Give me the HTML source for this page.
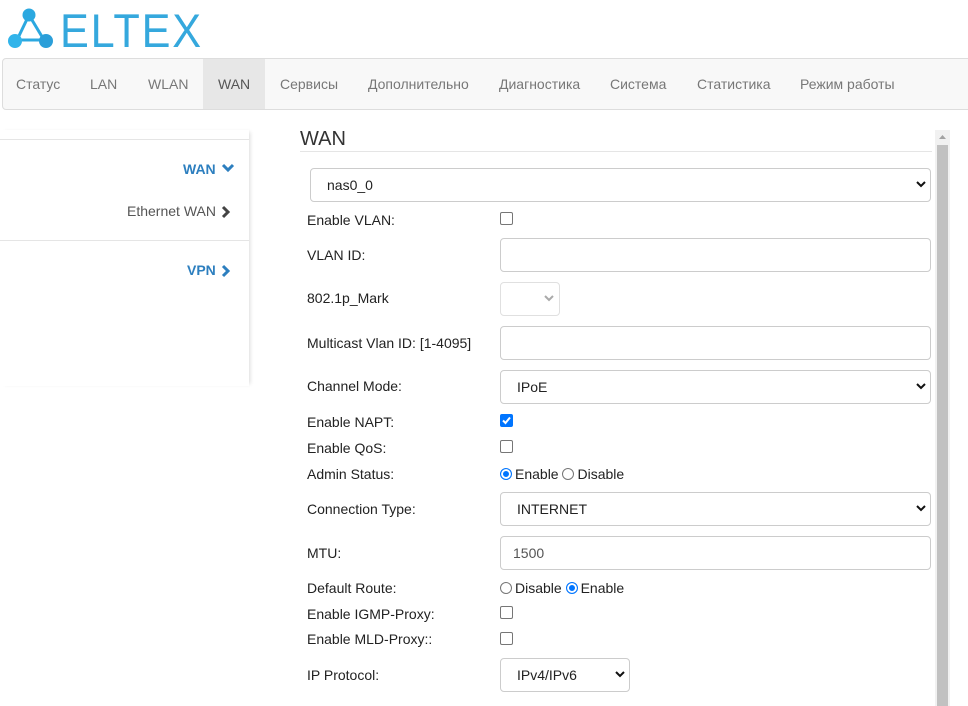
<!DOCTYPE html>
<html><head><meta charset="utf-8"><style>
body{margin:0;width:968px;height:706px;overflow:hidden;background:#fff;font-family:"Liberation Sans",sans-serif;font-size:14px;color:#222;position:relative}
.a{position:absolute}
.nav{left:2px;top:58px;width:980px;height:50px;background:#f8f8f8;border:1px solid #ddd;border-radius:4px}
.ni{top:76px;color:#777;font-size:14px}
.box{position:absolute;border:1px solid #ccc;border-radius:4px;box-sizing:border-box;background:#fff}
.lbl{position:absolute;left:307px;font-size:14px;color:#222}
.cb{position:absolute;left:500px;width:13px;height:13px;border:1px solid #767676;border-radius:2px;box-sizing:border-box;background:#fff}
.chev{position:absolute;right:3px;top:11px}
.rd{display:inline-block;width:12px;height:12px;border:1px solid #767676;border-radius:50%;box-sizing:border-box;vertical-align:-1px;margin-right:3px;background:#fff}
.rd.on{border:1px solid #0075ff;box-shadow:inset 0 0 0 2px #fff;background:#0075ff}
</style></head><body>
<svg class="a" style="left:6px;top:8px" width="50" height="42" viewBox="0 0 50 42">
<g fill="#2ba8e0" stroke="#2ba8e0" stroke-width="3">
<line x1="23" y1="7" x2="11" y2="32"/><line x1="23" y1="7" x2="38" y2="32"/><line x1="11" y1="32" x2="38" y2="32"/>
</g>
<circle cx="23" cy="7" r="6.5" fill="#2ba8e0"/><circle cx="9" cy="33" r="7" fill="#32b4ea"/><circle cx="40" cy="33" r="7" fill="#2b9fd9"/>
</svg>
<div class="a" style="left:60px;top:3px;font-size:47px;color:#35a8dd;letter-spacing:2px;transform:scaleX(0.92);transform-origin:left;font-weight:400">ELTEX</div>
<div class="a nav"></div>
<div class="a" style="left:203px;top:59px;width:62px;height:50px;background:#e7e7e7"></div>
<div class="a ni" style="left:16px">Статус</div>
<div class="a ni" style="left:90px">LAN</div>
<div class="a ni" style="left:148px">WLAN</div>
<div class="a ni" style="left:218px;color:#555">WAN</div>
<div class="a ni" style="left:280px">Сервисы</div>
<div class="a ni" style="left:368px">Дополнительно</div>
<div class="a ni" style="left:499px">Диагностика</div>
<div class="a ni" style="left:610px">Система</div>
<div class="a ni" style="left:697px">Статистика</div>
<div class="a ni" style="left:800px">Режим работы</div>

<div class="a" style="left:0;top:130px;width:249px;height:256px;box-shadow:3px 0 4px -2px rgba(0,0,0,0.15)"></div>
<div class="a" style="left:0;top:139px;width:249px;height:1px;background:#e5e5e5"></div>
<div class="a" style="left:0;top:240px;width:249px;height:1px;background:#e5e5e5"></div>
<div class="a" style="left:183px;top:161px;color:#2d7fbf;font-weight:bold">WAN</div>
<svg class="a" style="left:221px;top:163px" width="14" height="10"><polyline points="2,2 7,7 12,2" fill="none" stroke="#2d7fbf" stroke-width="3"/></svg>
<div class="a" style="left:127px;top:203px;color:#555">Ethernet WAN</div>
<svg class="a" style="left:221px;top:205px" width="10" height="14"><polyline points="2,2 7,7 2,12" fill="none" stroke="#444" stroke-width="3"/></svg>
<div class="a" style="left:187px;top:262px;color:#2d7fbf;font-weight:bold">VPN</div>
<svg class="a" style="left:221px;top:264px" width="10" height="14"><polyline points="2,2 7,7 2,12" fill="none" stroke="#2d7fbf" stroke-width="3"/></svg>

<div class="a" style="left:300px;top:128px;font-size:20px;color:#333">WAN</div>
<div class="a" style="left:300px;top:151px;width:632px;height:1px;background:#e5e5e5"></div>

<div class="box" style="left:310px;top:168px;width:621px;height:34px"><span class="a" style="left:16px;top:8px">nas0_0</span><svg class="chev" width="12" height="10"><polyline points="2,2 6,6 10,2" fill="none" stroke="#111" stroke-width="2"/></svg></div>
<div class="lbl" style="top:212px">Enable VLAN:</div><div class="cb" style="top:212px"></div>
<div class="lbl" style="top:247px">VLAN ID:</div><div class="box" style="left:500px;top:238px;width:431px;height:34px"></div>
<div class="lbl" style="top:290px">802.1p_Mark</div><div class="box" style="left:500px;top:282px;width:60px;height:34px;border-color:#e0e0e0"><svg class="chev" style="right:4px" width="12" height="10"><polyline points="2,2 6,6 10,2" fill="none" stroke="#aaa" stroke-width="2"/></svg></div>
<div class="lbl" style="top:335px">Multicast Vlan ID: [1-4095]</div><div class="box" style="left:500px;top:326px;width:431px;height:34px"></div>
<div class="lbl" style="top:378px">Channel Mode:</div><div class="box" style="left:500px;top:370px;width:431px;height:34px"><span class="a" style="left:16px;top:8px">IPoE</span><svg class="chev" width="12" height="10"><polyline points="2,2 6,6 10,2" fill="none" stroke="#111" stroke-width="2"/></svg></div>
<div class="lbl" style="top:414px">Enable NAPT:</div><div class="cb" style="top:414px;background:#0075ff;border-color:#0075ff"><svg width="11" height="11" style="position:absolute;left:0;top:0"><polyline points="2,5.5 4.5,8 9,2.5" fill="none" stroke="#fff" stroke-width="2"/></svg></div>
<div class="lbl" style="top:440px">Enable QoS:</div><div class="cb" style="top:440px"></div>
<div class="lbl" style="top:466px">Admin Status:</div><div class="a" style="left:500px;top:466px"><span class="rd on"></span>Enable <span class="rd"></span>Disable</div>
<div class="lbl" style="top:501px">Connection Type:</div><div class="box" style="left:500px;top:492px;width:431px;height:34px"><span class="a" style="left:16px;top:8px">INTERNET</span><svg class="chev" width="12" height="10"><polyline points="2,2 6,6 10,2" fill="none" stroke="#111" stroke-width="2"/></svg></div>
<div class="lbl" style="top:545px">MTU:</div><div class="box" style="left:500px;top:536px;width:431px;height:34px"><span class="a" style="left:12px;top:8px;color:#555">1500</span></div>
<div class="lbl" style="top:580px">Default Route:</div><div class="a" style="left:500px;top:580px"><span class="rd"></span>Disable <span class="rd on"></span>Enable</div>
<div class="lbl" style="top:606px">Enable IGMP-Proxy:</div><div class="cb" style="top:606px"></div>
<div class="lbl" style="top:631px">Enable MLD-Proxy::</div><div class="cb" style="top:632px"></div>
<div class="lbl" style="top:667px">IP Protocol:</div><div class="box" style="left:500px;top:658px;width:130px;height:34px"><span class="a" style="left:16px;top:8px">IPv4/IPv6</span><svg class="chev" width="12" height="10"><polyline points="2,2 6,6 10,2" fill="none" stroke="#111" stroke-width="2"/></svg></div>

<div class="a" style="left:935px;top:130px;width:15px;height:576px;background:#f1f1f1"></div>
<svg class="a" style="left:935px;top:130px" width="15" height="15"><polygon points="4,9 7.5,5 11,9" fill="#a3a3a3"/></svg>
<div class="a" style="left:937px;top:145px;width:11px;height:561px;background:#c1c1c1"></div>
</body></html>
